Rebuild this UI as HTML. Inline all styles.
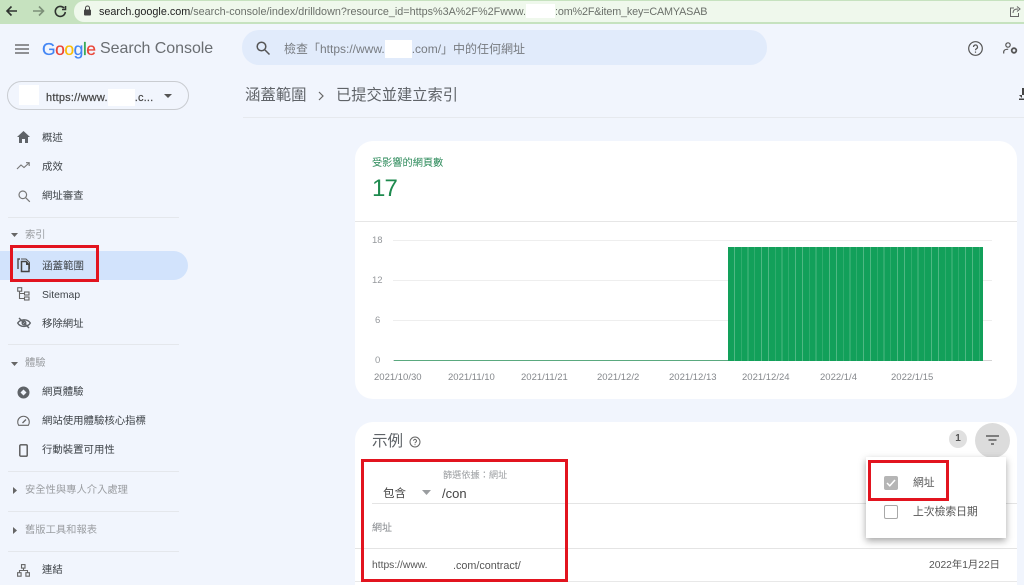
<!DOCTYPE html>
<html lang="zh-TW"><head><meta charset="utf-8"><title>Search Console</title>
<style>
html,body{margin:0;padding:0}
body{width:1024px;height:585px;overflow:hidden;position:relative;background:#f1f5fd;font-family:"Liberation Sans","Noto Sans CJK TC",sans-serif;color:#444}
.a{position:absolute}
.t{position:absolute;white-space:nowrap;line-height:16px}
.n{font-size:10.4px;color:#3f4449;left:42px}
.h{font-size:10.3px;color:#9a9da1;left:25px}
.d{position:absolute;height:1px;left:8px;width:171px;background:#e4e7ec}
.x{font-size:9.5px;color:#85888c;top:370px}
.y{font-size:9.5px;color:#95989c}
.g{position:absolute;left:393px;width:599px;height:1px;background:#eeeeee}
.r{position:absolute;border:3px solid #e2141f;box-sizing:border-box}
svg{position:absolute;overflow:visible}
</style></head><body>

<!-- browser bar -->
<div class="a" style="left:0;top:0;width:1024px;height:24px;background:#c6e2bf"></div>
<div class="a" style="left:74px;top:1px;width:950px;height:21px;border-radius:10px 0 0 10px;background:#eff8ec"></div>
<svg style="left:4px;top:3px" width="70" height="18" fill="none" stroke="#2f3330" stroke-width="1.6">
<path d="M13 8H3M7.500 3.500 3 8 7.500 12.500"/>
<path d="M39 8h-10M35 3.500 39.500 8 35 12.500" stroke="#7c8f78"/>
<path d="M60 5a5 5 0 1 0 1.300 4M61.500 3v3.500H58" />
</svg>
<svg style="left:83px;top:5px" width="9" height="11"><rect x="1" y="4.500" width="7" height="6" rx="1" fill="#444"/><path d="M2.500 5V3a2 2 0 0 1 4 0v2" fill="none" stroke="#444"/></svg>
<div class="t" style="left:99px;top:4px;font-size:10.8px;color:#6b706a"><span style="color:#222">search.google.com</span>/search-console/index/drilldown?resource_id=https%3A%2F%2Fwww.<span style="display:inline-block;width:29px;background:#fff;height:14px;vertical-align:-3px"></span><span style="letter-spacing:-.16px">:om%2F&amp;item_key=CAMYASAB</span></div>
<svg style="left:1009px;top:5px" width="12" height="13" fill="none" stroke="#666"><path d="M5 3H1.500v8.500h8V8M4 8c0-3 2-4 5-4M8 1.500l3 2.500-3 2.500"/></svg>

<!-- header -->
<svg style="left:15px;top:44px" width="14" height="10" stroke="#555" stroke-width="1.300"><path d="M0 1h14M0 5h14M0 9h14"/></svg>
<div class="t" style="left:42px;top:39px;font-size:17.5px;line-height:20px;letter-spacing:-.5px;-webkit-text-stroke:.2px"><span style="color:#4285f4">G</span><span style="color:#ea4335">o</span><span style="color:#fbbc05">o</span><span style="color:#4285f4">g</span><span style="color:#34a853">l</span><span style="color:#ea4335">e</span></div>
<div class="t" style="left:100px;top:39px;font-size:16px;line-height:20px;letter-spacing:-.05px;color:#6a6e72">Search Console</div>
<div class="a" style="left:242px;top:30px;width:525px;height:35px;border-radius:17px;background:#e1ebfb"></div>
<svg style="left:256px;top:41px" width="14" height="14" fill="none" stroke="#555" stroke-width="1.500"><circle cx="5.500" cy="5.500" r="4.300"/><path d="M9 9l4.500 4.500"/></svg>
<div class="t" style="left:284px;top:40px;font-size:12px;color:#777b80">檢查「https://www.<span style="display:inline-block;width:27px;background:#fff;height:18px;vertical-align:-5px"></span>.com/」中的任何網址</div>
<svg style="left:968px;top:41px" width="15" height="15" fill="none" stroke="#555" stroke-width="1.200"><circle cx="7.500" cy="7.500" r="6.800"/><path d="M5.500 6a2 2 0 1 1 3 1.700c-.7.400-1 .8-1 1.600M7.500 10.500v1.200"/></svg>
<svg style="left:1003px;top:42px" width="15" height="13" fill="none" stroke="#555" stroke-width="1.200"><circle cx="5" cy="3" r="2.200"/><path d="M.7 11.500V10c0-1.800 2-2.800 4.500-2.800"/><circle cx="11" cy="8.500" r="2.300" stroke-width="1.800"/></svg>

<!-- property selector -->
<div class="a" style="left:7px;top:81px;width:182px;height:29px;box-sizing:border-box;border:1px solid #c9ccd1;border-radius:15px"></div>
<div class="a" style="left:19px;top:85px;width:20px;height:20px;background:#fff"></div>
<div class="t" style="left:46px;top:89px;font-size:11px;letter-spacing:.2px;color:#444;-webkit-text-stroke:.2px">https://www.<span style="display:inline-block;width:27px;background:#fff;height:17px;vertical-align:-5px"></span>.c...</div>
<svg style="left:164px;top:94px" width="9" height="5"><path d="M0 0h8L4 4z" fill="#555"/></svg>

<!-- sidebar -->
<div class="a" style="left:0;top:251px;width:188px;height:29px;background:#d2e3fc;border-radius:0 15px 15px 0"></div>

<svg style="left:17px;top:131px" width="13" height="12"><path d="M6.500 0 13 6h-2v6H8V8H5v4H2V6H0z" fill="#5f6368"/></svg>
<svg style="left:17px;top:162px" width="13" height="8" fill="none" stroke="#777" stroke-width="1.100"><path d="M0 7 4 3l3 2.500L12 1M9 .7h3.200V4"/></svg>
<svg style="left:18px;top:190px" width="12" height="12" fill="none" stroke="#777" stroke-width="1.200"><circle cx="4.800" cy="4.800" r="3.800"/><path d="M7.800 7.800l4 4"/></svg>
<svg style="left:17px;top:258px" width="13" height="15"><path d="M3 1H1v10" fill="none" stroke="#555" stroke-width="1.500"/><path d="M4 1h5l3.500 3.500V11" fill="none" stroke="#555" stroke-width="1"/><path d="M4.500 3.500h4.500l3 3v7h-7.500z" fill="#d2e3fc" stroke="#444" stroke-width="1.500"/><path d="M9 4v3h3z" fill="#444"/></svg>
<svg style="left:17px;top:287px" width="13" height="14" fill="none" stroke="#666" stroke-width="1.100"><rect x=".7" y=".7" width="4" height="3.500"/><rect x="7.500" y="5" width="4.500" height="3"/><rect x="7.500" y="10" width="4.500" height="3"/><path d="M2.500 4.500v7h5M2.500 6.500h5"/></svg>
<svg style="left:17px;top:317px" width="14" height="12" fill="none" stroke="#5f6368" stroke-width="1.400"><path d="M.7 6C3 2.500 10 1 13.300 6 11 10 3.500 11 .7 6z"/><circle cx="7" cy="6" r="1.800"/><path d="M2 1l10 10"/></svg>
<svg style="left:17px;top:386px" width="13" height="13"><circle cx="6.500" cy="6.500" r="6" fill="#5f6368"/><path d="M3.500 6.500 6.500 3.500 9.500 6.500 6.500 9.500z" fill="#f1f5fd"/></svg>
<svg style="left:17px;top:416px" width="13" height="10" fill="none" stroke="#666" stroke-width="1.100"><path d="M1.700 9.300A5.800 5.800 0 1 1 11.300 9.300z"/><path d="M5.500 7 9 3.500" stroke-width="1.300"/></svg>
<svg style="left:19px;top:444px" width="9" height="13" fill="none" stroke="#555" stroke-width="1.400"><rect x=".8" y=".8" width="7.400" height="11.400" rx="1"/></svg>
<svg style="left:17px;top:564px" width="13" height="13" fill="none" stroke="#666" stroke-width="1.100"><rect x="4.500" y=".6" width="3.500" height="3.500"/><rect x=".6" y="8.700" width="3.500" height="3.500"/><rect x="8.900" y="8.700" width="3.500" height="3.500"/><path d="M6.500 4v2.500M2.500 8.700V6.500h8v2.200"/></svg>

<div class="t n" style="top:131px">概述</div>
<div class="t n" style="top:160px">成效</div>
<div class="t n" style="top:189px">網址審查</div>
<div class="d" style="top:217px"></div>
<svg style="left:11px;top:233px" width="7" height="4"><path d="M0 0h7L3.500 4z" fill="#666"/></svg>
<div class="t h" style="top:228px">索引</div>
<div class="t n" style="top:258px;font-size:10.500px">涵蓋範圍</div>
<div class="t n" style="top:288px">Sitemap</div>
<div class="t n" style="top:317px">移除網址</div>
<div class="d" style="top:344px"></div>
<svg style="left:11px;top:362px" width="7" height="4"><path d="M0 0h7L3.500 4z" fill="#666"/></svg>
<div class="t h" style="top:356px">體驗</div>
<div class="t n" style="top:385px">網頁體驗</div>
<div class="t n" style="top:414px">網站使用體驗核心指標</div>
<div class="t n" style="top:443px">行動裝置可用性</div>
<div class="d" style="top:471px"></div>
<svg style="left:13px;top:487px" width="4" height="7"><path d="M0 0v7l4-3.500z" fill="#666"/></svg>
<div class="t h" style="top:483px">安全性與專人介入處理</div>
<div class="d" style="top:511px"></div>
<svg style="left:13px;top:527px" width="4" height="7"><path d="M0 0v7l4-3.500z" fill="#666"/></svg>
<div class="t h" style="top:523px">舊版工具和報表</div>
<div class="d" style="top:551px"></div>
<div class="t n" style="top:563px">連結</div>

<!-- breadcrumb -->
<div class="t" style="left:245px;top:86px;font-size:15.400px;line-height:20px;color:#5f6368">涵蓋範圍</div>
<svg style="left:318px;top:91px" width="7" height="10" fill="none" stroke="#666" stroke-width="1.200"><path d="M1 1l4 4-4 4"/></svg>
<div class="t" style="left:336px;top:86px;font-size:15.250px;line-height:20px;color:#5f6368">已提交並建立索引</div>
<div class="a" style="left:243px;top:117px;width:781px;height:1px;background:#e6e9ee"></div>
<svg style="left:1019px;top:88px" width="5" height="14"><path d="M3 0h2v12H0v-1.500h5V7H0l3 3z" fill="#444"/></svg>

<!-- chart card -->
<div class="a" style="left:355px;top:141px;width:662px;height:258px;background:#fff;border-radius:18px"></div>
<div class="t" style="left:372px;top:156px;font-size:10.200px;color:#2c8a5a">受影響的網頁數</div>
<div class="t" style="left:372px;top:176px;font-size:24px;line-height:26px;letter-spacing:-.8px;color:#1e8a4e">17</div>
<div class="a" style="left:355px;top:221px;width:662px;height:1px;background:#e6e6e6"></div>
<div class="g" style="top:240px"></div><div class="g" style="top:280px"></div><div class="g" style="top:320px"></div><div class="g" style="top:360px;background:#d4d4d4"></div>
<div class="t y" style="left:372px;top:233px">18</div>
<div class="t y" style="left:372px;top:273px">12</div>
<div class="t y" style="left:375px;top:313px">6</div>
<div class="t y" style="left:375px;top:353px">0</div>
<div class="a" style="left:394px;top:360px;width:334px;height:1px;background:#5aa97f"></div>
<div class="a" style="left:728px;top:247px;width:255px;height:114px;background:repeating-linear-gradient(90deg,#12a05a 0,#12a05a 6px,#4fb883 6px,#4fb883 6.800px)"></div>
<div class="t x" style="left:374px">2021/10/30</div>
<div class="t x" style="left:448px">2021/11/10</div>
<div class="t x" style="left:521px">2021/11/21</div>
<div class="t x" style="left:597px">2021/12/2</div>
<div class="t x" style="left:669px">2021/12/13</div>
<div class="t x" style="left:742px">2021/12/24</div>
<div class="t x" style="left:820px">2022/1/4</div>
<div class="t x" style="left:891px">2022/1/15</div>

<!-- table card -->
<div class="a" style="left:355px;top:422px;width:662px;height:163px;background:#fff;border-radius:18px 18px 0 0"></div>
<div class="t" style="left:372px;top:432px;font-size:15.500px;line-height:20px;color:#5f6368">示例</div>
<svg style="left:409px;top:436px" width="12" height="12" fill="none" stroke="#666"><circle cx="6" cy="6" r="5"/><path d="M4.500 4.800a1.500 1.500 0 1 1 2.300 1.300c-.5.300-.8.600-.8 1.100M6 8.200v.9"/></svg>
<div class="a" style="left:949px;top:430px;width:18px;height:18px;border-radius:50%;background:#e0e0e0"></div>
<div class="t" style="left:949px;top:431px;width:18px;text-align:center;font-size:10px;font-weight:700;color:#555">1</div>
<div class="a" style="left:975px;top:423px;width:35px;height:35px;border-radius:50%;background:#dcdcdc"></div>
<svg style="left:986px;top:435px" width="13" height="10" stroke="#444" stroke-width="1.300"><path d="M0 1h13M2.500 5h8M5 9h3"/></svg>

<div class="t" style="left:443px;top:467px;font-size:9.200px;color:#9a9da0">篩選依據：網址</div>
<div class="t" style="left:383px;top:486px;font-size:11.500px;color:#444">包含</div>
<svg style="left:422px;top:490px" width="9" height="5"><path d="M0 0h9L4.500 5z" fill="#9a9da0"/></svg>
<div class="t" style="left:442px;top:486px;font-size:13px;color:#444">/con</div>
<div class="a" style="left:372px;top:503px;width:645px;height:1px;background:#e4e4e4"></div>
<div class="t" style="left:372px;top:521px;font-size:10px;color:#85888c">網址</div>
<div class="a" style="left:355px;top:548px;width:662px;height:1px;background:#e4e4e4"></div>
<div class="t" style="left:372px;top:558px;font-size:10.300px;color:#555">https://www.</div>
<div class="t" style="left:453px;top:558px;font-size:10.800px;color:#555">.com/contract/</div>
<div class="t" style="left:929px;top:558px;font-size:10.300px;color:#555">2022年1月22日</div>
<div class="a" style="left:355px;top:581px;width:662px;height:1px;background:#e8e8e8"></div>

<!-- popup -->
<div class="a" style="left:866px;top:457px;width:140px;height:81px;background:#fff;box-shadow:0 3px 7px rgba(0,0,0,.35)"></div>
<div class="a" style="left:884px;top:476px;width:14px;height:14px;background:#b5b5b5;border-radius:2px"></div>
<svg style="left:886px;top:479px" width="10" height="8" fill="none" stroke="#fff" stroke-width="1.500"><path d="M1 4l2.800 2.800L9 1"/></svg>
<div class="t" style="left:913px;top:475px;font-size:10.800px;color:#555">網址</div>
<div class="a" style="left:884px;top:505px;width:14px;height:14px;box-sizing:border-box;border:1px solid #a8a8a8;border-radius:2px"></div>
<div class="t" style="left:913px;top:504px;font-size:10.800px;color:#555">上次檢索日期</div>

<!-- red annotation boxes -->
<div class="r" style="left:10px;top:245px;width:89px;height:37px"></div>
<div class="r" style="left:361px;top:459px;width:207px;height:123px"></div>
<div class="r" style="left:868px;top:460px;width:81px;height:41px"></div>
</body></html>
